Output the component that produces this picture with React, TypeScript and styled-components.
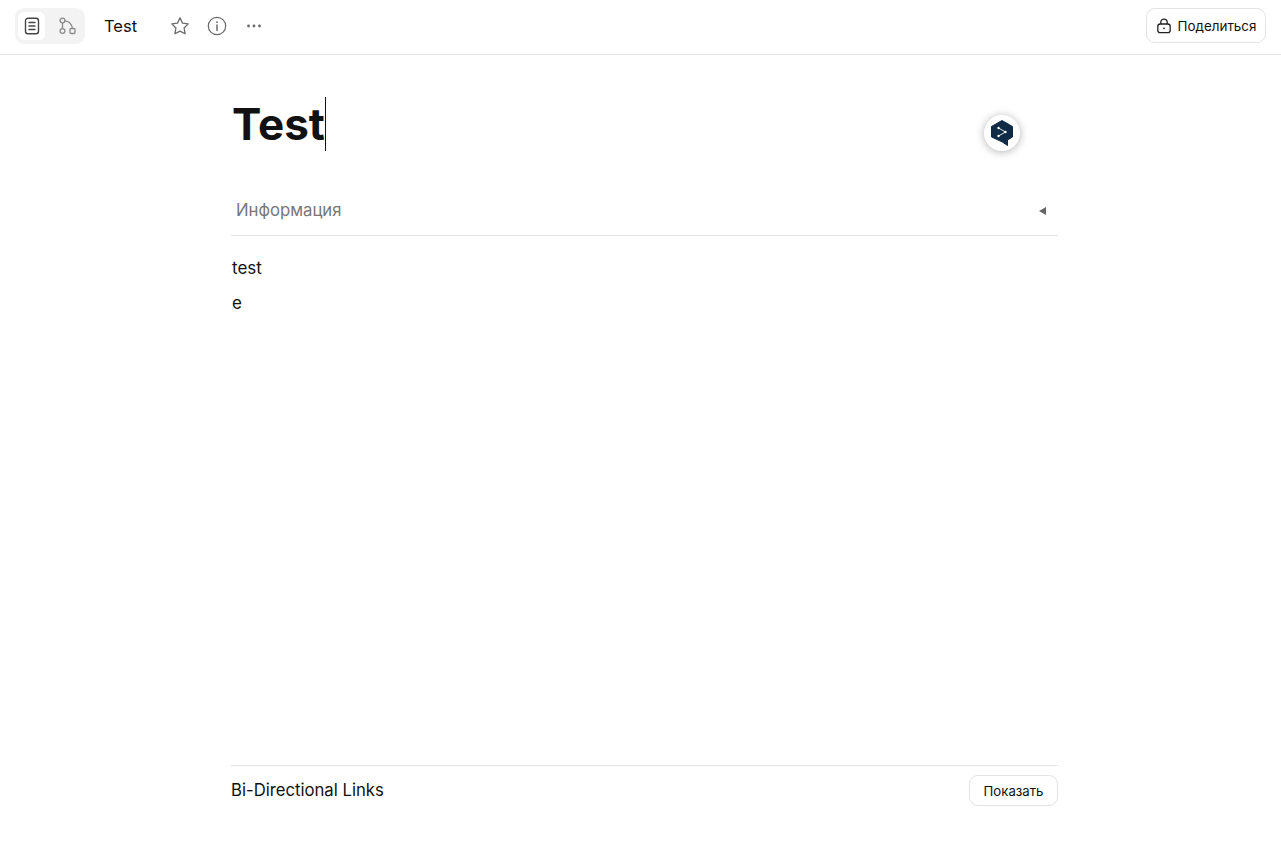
import styled, { createGlobalStyle } from "styled-components";

const GlobalStyle = createGlobalStyle`
  html, body {
    margin: 0;
    padding: 0;
    background: #fff;
    font-family: Inter, "Noto Sans", sans-serif;
    color: #111;
  }
  * { box-sizing: border-box; }
`;

const Page = styled.div`
  height: 842px;
  display: flex;
  flex-direction: column;
  overflow: hidden;
`;

const TopBar = styled.header`
  height: 55px;
  flex: none;
  display: flex;
  align-items: flex-start;
  padding: 8px 15px 0;
  border-bottom: 1px solid #e3e3e3;
`;

const ModeSwitch = styled.div`
  width: 70px;
  height: 36px;
  padding: 4px 3px;
  display: flex;
  gap: 8px;
  border-radius: 9px;
  background: #f3f3f3;
`;

const ModeButton = styled.div<{ $active?: boolean }>`
  width: 27px;
  height: 28px;
  display: flex;
  align-items: center;
  justify-content: center;
  border-radius: 6px;
  color: ${(p) => (p.$active ? "#444" : "#8a8a8a")};
  background: ${(p) => (p.$active ? "#fff" : "transparent")};
`;

const DocName = styled.div`
  margin: 7px 0 0 19px;
  width: 65px;
  font-size: 16.5px;
  font-weight: 400;
  line-height: 22px;
  color: #111;
`;

const IconRow = styled.div`
  margin-top: 7px;
  display: flex;
  align-items: center;
  gap: 15px;
  color: #6a6a6a;
`;

const IconSlot = styled.div`
  width: 22px;
  height: 22px;
  display: flex;
  align-items: center;
  justify-content: center;
`;

const ShareButton = styled.button`
  margin-left: auto;
  width: 120px;
  height: 35px;
  padding: 0;
  display: flex;
  align-items: center;
  justify-content: center;
  gap: 6px;
  background: #fff;
  border: 1px solid #e3e3e3;
  border-radius: 9px;
  font: 400 13.4px Inter, sans-serif;
  color: #111;
`;

const Content = styled.main`
  position: relative;
  flex: 1;
  width: 827px;
  margin-left: 231px;
`;

const Title = styled.h1`
  margin: 42px 0 0 1px;
  height: 54px;
  display: flex;
  align-items: center;
  font-size: 44px;
  font-weight: 700;
  line-height: 54px;
  color: #111;
`;

const Caret = styled.span`
  width: 1px;
  height: 54px;
  background: #111;
`;

const PropsHeader = styled.div`
  margin-top: 35px;
  height: 50px;
  padding: 0 12px 1px 5px;
  display: flex;
  align-items: center;
  justify-content: space-between;
  border-bottom: 1px solid #e3e3e3;
  font-size: 16.7px;
  color: #777;
`;

const Arrow = styled.span`
  width: 0;
  height: 0;
  margin-top: 1px;
  border-top: 4px solid transparent;
  border-bottom: 4px solid transparent;
  border-right: 7px solid #666;
`;

const Paragraph = styled.p<{ $first?: boolean }>`
  margin: ${(p) => (p.$first ? "21px" : "13px")} 0 0 1px;
  font-size: 17px;
  line-height: 22px;
  color: #111;
`;

const Footer = styled.footer`
  width: 827px;
  height: 77px;
  flex: none;
  margin-left: 231px;
  padding-top: 9px;
  border-top: 1px solid #e3e3e3;
  display: flex;
  align-items: flex-start;
  justify-content: space-between;
`;

const LinksTitle = styled.div`
  margin-top: 4px;
  font-size: 16.7px;
  font-weight: 400;
  line-height: 22px;
  color: #111;
`;

const ShowButton = styled.button`
  width: 89px;
  height: 31px;
  padding: 0;
  background: #fff;
  border: 1px solid #e3e3e3;
  border-radius: 9px;
  font: 400 13.2px Inter, sans-serif;
  color: #111;
`;

const TranslateBadge = styled.div`
  position: absolute;
  left: 753px;
  top: 60px;
  width: 36px;
  height: 36px;
  display: flex;
  align-items: center;
  justify-content: center;
  border-radius: 50%;
  background: #fff;
  box-shadow: 0 1px 8px rgba(0, 0, 0, 0.3);
`;

export default function App() {
  return (
    <Page>
      <GlobalStyle />
      <TopBar>
        <ModeSwitch>
          <ModeButton $active>
            <svg width="18" height="18" viewBox="0 0 18 18" fill="none" stroke="currentColor" strokeWidth="1.4" strokeLinecap="round">
              <rect x="2.5" y="1.2" width="13" height="15.6" rx="2.5" />
              <path d="M6 5.500h6M6 9h6M6 12.500h6" />
            </svg>
          </ModeButton>
          <ModeButton>
            <svg width="18" height="18" viewBox="0 0 18 18" fill="none" stroke="currentColor" strokeWidth="1.3">
              <circle cx="4.5" cy="3.5" r="2.4" />
              <circle cx="4.5" cy="14" r="2.4" />
              <rect x="12" y="11.5" width="5" height="5" rx="1" />
              <path d="M4.5 6v5.5M6.8 3.8c4 .2 6.700 2.500 7.700 7.700" />
            </svg>
          </ModeButton>
        </ModeSwitch>
        <DocName>Test</DocName>
        <IconRow>
          <IconSlot>
            <svg width="20" height="20" viewBox="0 0 20 20" fill="none" stroke="currentColor" strokeWidth="1.3" strokeLinejoin="round">
              <path d="M10 1.800l2.500 5.300 5.700.8-4.100 4.100 1 5.800L10 15.100 4.900 17.800l1-5.800L1.800 7.900l5.700-.8z" />
            </svg>
          </IconSlot>
          <IconSlot>
            <svg width="20" height="20" viewBox="0 0 20 20" fill="none" stroke="currentColor" strokeWidth="1.2" strokeLinecap="round">
              <circle cx="10" cy="10" r="8.700" />
              <path d="M10 9v5.500" strokeWidth="1.500" />
              <circle cx="10" cy="6.200" r=".9" fill="currentColor" stroke="none" />
            </svg>
          </IconSlot>
          <IconSlot>
            <svg width="16" height="4" viewBox="0 0 16 4" fill="currentColor">
              <circle cx="2.500" cy="2" r="1.400" />
              <circle cx="8" cy="2" r="1.400" />
              <circle cx="13.500" cy="2" r="1.400" />
            </svg>
          </IconSlot>
        </IconRow>
        <ShareButton>
          <svg width="16" height="16" viewBox="0 0 16 16" fill="none" stroke="#222" strokeWidth="1.300">
            <rect x="1.800" y="6" width="12.400" height="8.700" rx="2.500" />
            <path d="M4.800 6V4.300a3.200 3.200 0 0 1 6.400 0V6" />
            <circle cx="8" cy="10.300" r=".9" fill="#222" stroke="none" />
          </svg>
          Поделиться
        </ShareButton>
      </TopBar>
      <Content>
        <Title>
          Test
          <Caret />
        </Title>
        <TranslateBadge>
          <svg width="26" height="28" viewBox="0 0 26 28">
            <path d="M13 1.500L23.500 7.500V18L18.500 21V26.500L13 22.800L2.500 18V7.500Z" fill="#0f2b46" stroke="#0f2b46" strokeLinejoin="round" />
            <path d="M9.500 9L16.500 13L9.500 17" fill="none" stroke="#fff" strokeWidth=".9" />
            <circle cx="9.500" cy="9" r="1.200" fill="#fff" />
            <circle cx="16.500" cy="13" r="1.200" fill="#fff" />
            <circle cx="9.500" cy="17" r="1.200" fill="#fff" />
          </svg>
        </TranslateBadge>
        <PropsHeader>
          Информация
          <Arrow />
        </PropsHeader>
        <Paragraph $first>test</Paragraph>
        <Paragraph>e</Paragraph>
      </Content>
      <Footer>
        <LinksTitle>Bi-Directional Links</LinksTitle>
        <ShowButton>Показать</ShowButton>
      </Footer>
    </Page>
  );
}
